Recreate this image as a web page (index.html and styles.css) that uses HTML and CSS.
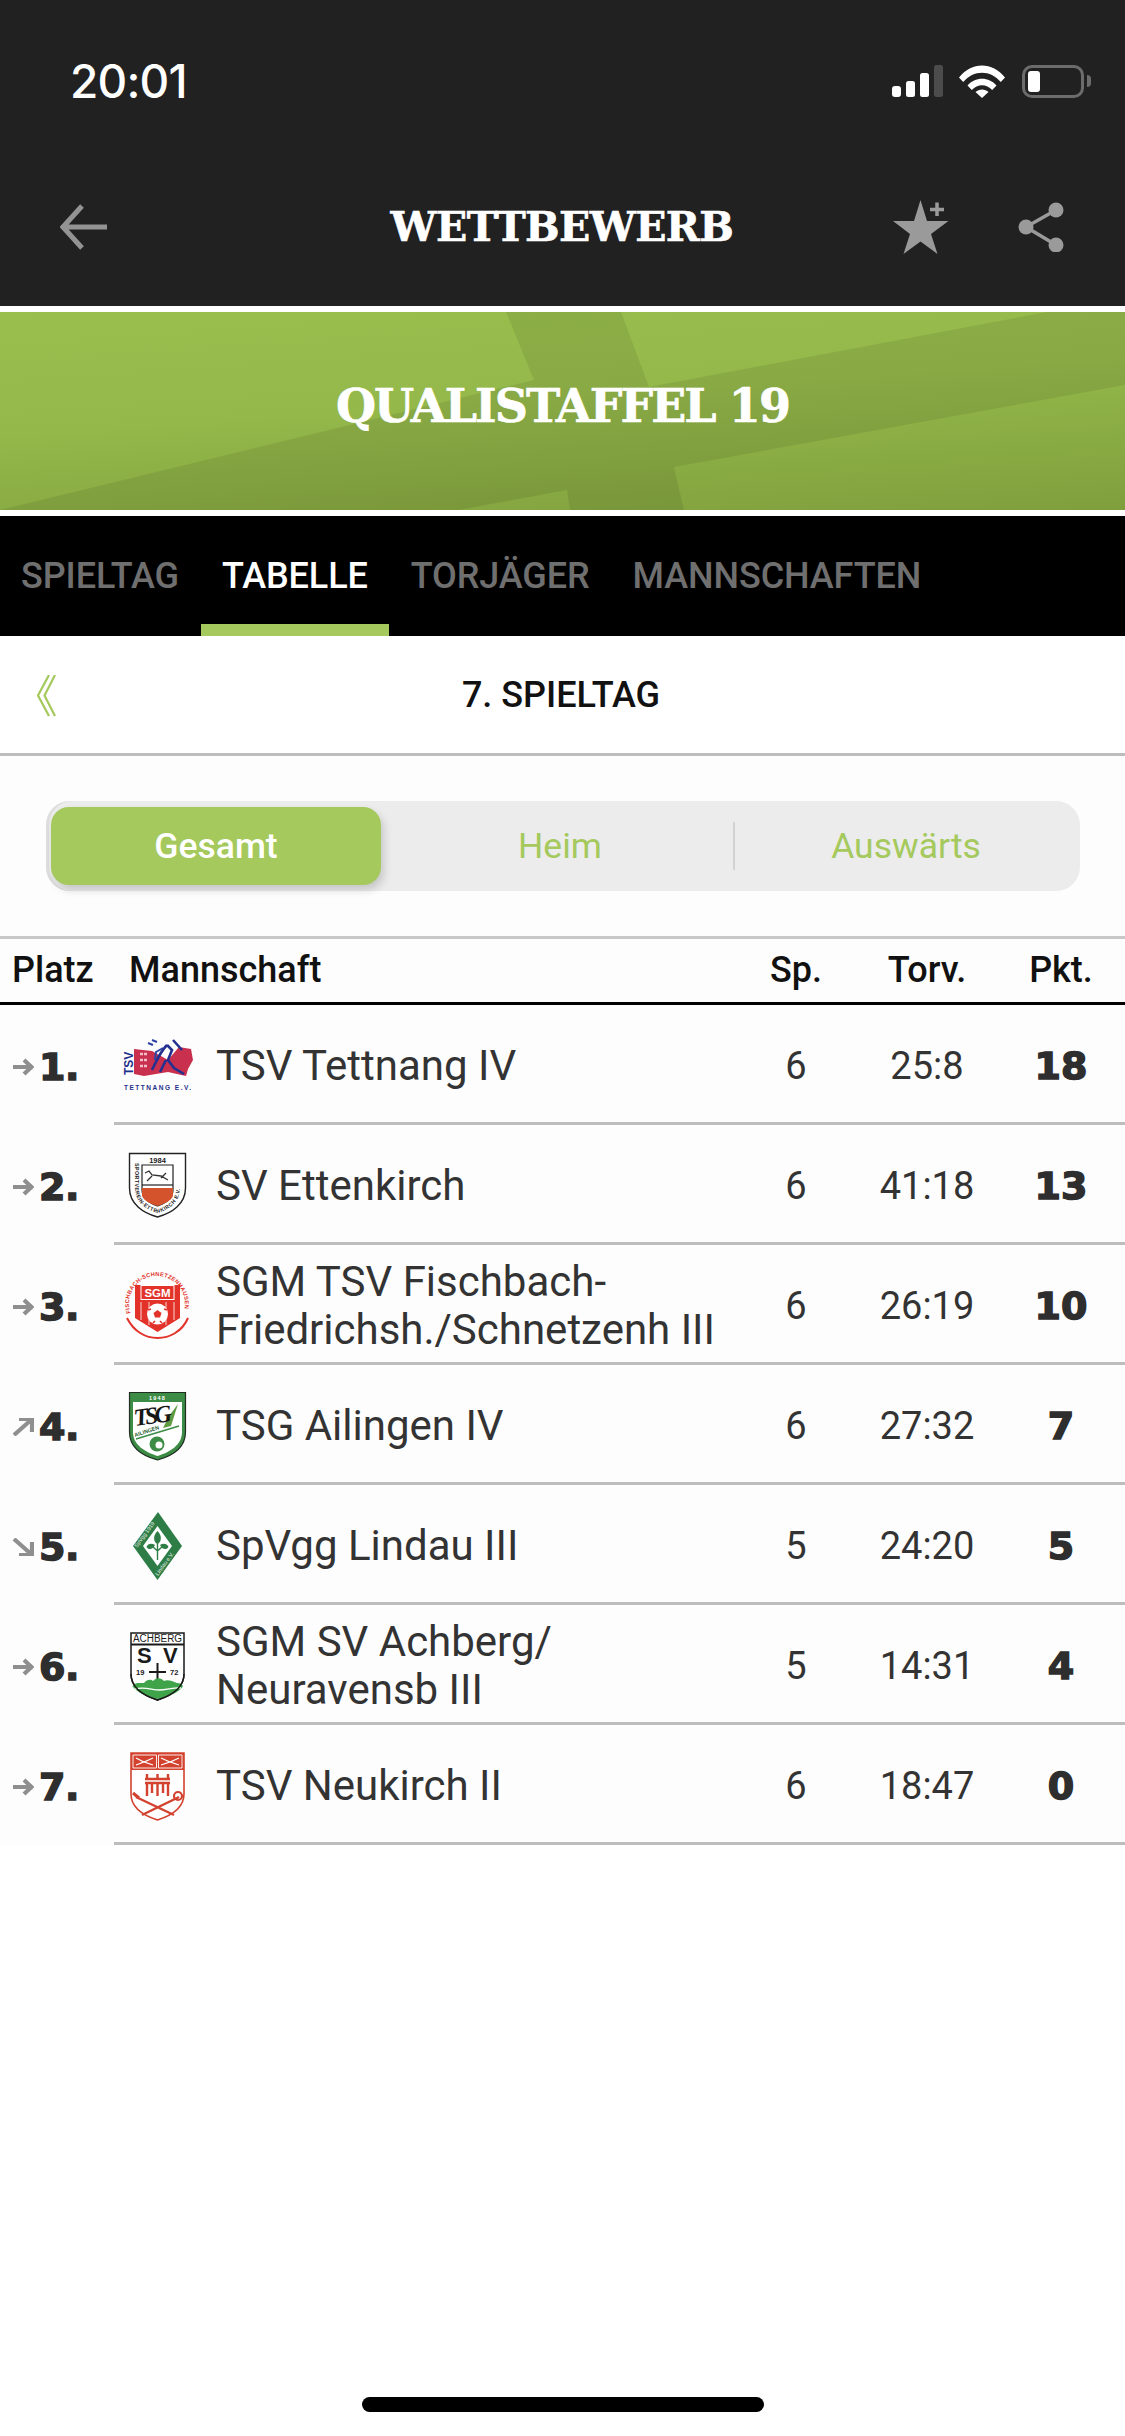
FILE: index.html
```html
<!DOCTYPE html>
<html lang="de">
<head>
<meta charset="utf-8">
<title>Wettbewerb</title>
<link rel="stylesheet" href="styles.css">
</head>
<body>
<div class="page">
  <header class="topbar">
    <div class="statusbar">
      <span class="time">20:01</span>
      <div class="status-icons">
        <svg class="ic-signal" viewBox="0 0 51 32" width="51" height="32"><rect x="0" y="21" width="9" height="11" rx="3" fill="#fff"/><rect x="14" y="16" width="9" height="16" rx="2.5" fill="#fff"/><rect x="28" y="8" width="9" height="24" rx="2.5" fill="#fff"/><rect x="42" y="0" width="9" height="32" rx="2.5" fill="#4c4c4c"/></svg>
        <svg class="ic-wifi" viewBox="0 0 46 33" width="46" height="33"><path d="M0 12.5C12.5 -3.5 33.5 -3.5 46 12.5L41.8 17C31.5 4.5 14.5 4.5 4.2 17Z" fill="#fff"/><path d="M8.5 20.5C16 11.5 30 11.5 37.500 20.500L33.200 25C27.500 18.500 18.500 18.500 12.800 25Z" fill="#fff"/><path d="M16.500 27C20 23.500 26 23.500 29.500 27L23 33Z" fill="#fff"/></svg>
        <div class="battery"><span class="battery-fill"></span></div>
        <span class="battery-nub"></span>
      </div>
    </div>
    <nav class="navbar">
      <svg class="ic-back" viewBox="0 0 47 46" width="47" height="46"><path d="M22 2 3 23 22 44M3 23H47" fill="none" stroke="#939393" stroke-width="5"/></svg>
      <h1 class="nav-title">WETTBEWERB</h1>
      <div class="nav-actions">
        <svg class="ic-star" viewBox="0 0 56 54" width="56" height="54"><path d="M27.500 0 34 21H55.500L38 34 44.500 54 27.500 41.500 10.500 54 17 34 0 21H21Z" fill="#9a9a9a"/><path d="M44 2.500V16M37 9.500H51" stroke="#9a9a9a" stroke-width="3.500"/></svg>
        <svg class="ic-share" viewBox="0 0 46 50" width="46" height="50"><path d="M38 8 8 25 38 43" fill="none" stroke="#9a9a9a" stroke-width="3.500"/><circle cx="38" cy="8" r="7.500" fill="#9a9a9a"/><circle cx="8" cy="25" r="7.500" fill="#9a9a9a"/><circle cx="38" cy="43" r="7.500" fill="#9a9a9a"/></svg>
      </div>
    </nav>
  </header>

  <section class="banner">
    <svg class="banner-art" viewBox="0 0 1125 198" preserveAspectRatio="none"><path d="M506 0H621L649 75 1047 0H1125V73L674 155 684 198H570L567 178 459 198H0L534 68Z" fill="#000" fill-opacity=".08"/></svg>
    <h2 class="banner-title">QUALISTAFFEL 19</h2>
  </section>

  <nav class="tabs">
    <a class="tab">SPIELTAG</a>
    <a class="tab tab-active">TABELLE</a>
    <a class="tab">TORJÄGER</a>
    <a class="tab">MANNSCHAFTEN</a>
  </nav>

  <div class="matchday">
    <svg class="ic-chevrons" viewBox="0 0 19 42" width="19" height="42"><path d="M12 0 1 20.500 12 41M18 0 7.500 20.500 18 41" fill="none" stroke="#a5c95c" stroke-width="2.200"/></svg>
    <span class="matchday-label">7. SPIELTAG</span>
  </div>

  <div class="segment-wrap">
    <div class="segment">
      <div class="seg seg-active">Gesamt</div>
      <div class="seg seg-mid">Heim</div>
      <div class="seg-sep"></div>
      <div class="seg seg-last">Auswärts</div>
    </div>
  </div>

  <main class="table">
    <div class="thead">
      <span class="th-place">Platz</span>
      <span class="th-team">Mannschaft</span>
      <span class="num">Sp.</span>
      <span class="num">Torv.</span>
      <span class="num">Pkt.</span>
    </div>

    <div class="row">
      <div class="place">
        <svg class="trend" viewBox="0 0 22 18" width="22" height="18"><path d="M1 9H19M12 2 19.500 9 12 16" fill="none" stroke="#8f8f8f" stroke-width="4.200"/></svg>
        <span class="rank">1.</span>
      </div>
      <div class="cells">
        <svg class="logo" viewBox="0 0 72 72" width="72" height="72">
          <path d="M12 19 30 21 46 30 57 17 69 19 71 30 66 39 64 46 46 42 22 46 12 44Z" fill="#c9304e"/>
          <path d="M30 40C36 28 38 22 45 15M45 15 50 20 46 30 52 38 62 44M44 30 38 42M51 10 60 20" fill="none" stroke="#24308f" stroke-width="2.600"/>
          <path d="M41 18 34 22 33 30M26 13 31 15M30 10 35 12" fill="none" stroke="#2d44a6" stroke-width="2"/>
          <path d="M18 24H26M18 30H26M18 36H26" stroke="#f3bcc8" stroke-width="2.500" stroke-dasharray="3 1"/>
          <text class="logo-b" x="11" y="45" transform="rotate(-90 11 45)" font-size="12" fill="#1d2f8c">TSV</text>
          <text class="logo-b" x="2" y="60" font-size="6.500" textLength="67" fill="#1d2f8c">TETTNANG E.V.</text>
        </svg>
        <div class="team">TSV Tettnang IV</div>
        <span class="num val">6</span><span class="num val">25:8</span><span class="num pts">18</span>
      </div>
    </div>

    <div class="row">
      <div class="place">
        <svg class="trend" viewBox="0 0 22 18" width="22" height="18"><path d="M1 9H19M12 2 19.500 9 12 16" fill="none" stroke="#8f8f8f" stroke-width="4.200"/></svg>
        <span class="rank">2.</span>
      </div>
      <div class="cells">
        <svg class="logo" viewBox="0 0 72 72" width="72" height="72">
          <defs><path id="ett" d="M13 13V38C13 52 24 60 35.500 63C47 60 58 52 58 38V13"/></defs>
          <path d="M7.500 3.500H63.500V38C63.500 54 50 63 35.500 67 21 63 7.500 54 7.500 38Z" fill="#fff" stroke="#222" stroke-width="1.400"/>
          <text class="logo-b" x="35.500" y="12.500" font-size="7.500" text-anchor="middle" fill="#222">1984</text>
          <path d="M20 15H51V40C51 49 43 53 35.500 56 28 53 20 49 20 40Z" fill="#fff" stroke="#222" stroke-width="1.200"/>
          <path d="M20 35H51" stroke="#222" stroke-width="1.200"/>
          <path d="M20 38H51V46C49 51 42 54 35.500 56 29 54 22 51 20 46Z" fill="#d4532c"/>
          <path d="M23 23 27 21 30 25 39 26 46 30M30 26 25 31M39 28 44 23" fill="none" stroke="#333" stroke-width="1.300"/>
          <text font-size="5.300" class="logo-b" fill="#222" letter-spacing=".45"><textPath href="#ett" startOffset="0">SPORTVEREIN-ETTENKIRCH E.V.</textPath></text>
        </svg>
        <div class="team">SV Ettenkirch</div>
        <span class="num val">6</span><span class="num val">41:18</span><span class="num pts">13</span>
      </div>
    </div>

    <div class="row">
      <div class="place">
        <svg class="trend" viewBox="0 0 22 18" width="22" height="18"><path d="M1 9H19M12 2 19.500 9 12 16" fill="none" stroke="#8f8f8f" stroke-width="4.200"/></svg>
        <span class="rank">3.</span>
      </div>
      <div class="cells">
        <svg class="logo" viewBox="0 0 72 72" width="72" height="72">
          <defs><path id="sgm" d="M8.500 43A28 28 0 1 1 61.500 43"/></defs>
          <path d="M5 48C12 62 24 68 35.500 68 47 68 60 62 66 48" fill="none" stroke="#e3322a" stroke-width="2"/>
          <text class="logo-b" font-size="5.700" fill="#e3322a" letter-spacing=".3"><textPath href="#sgm" startOffset="0">FISCHBACH-SCHNETZENHAUSEN</textPath></text>
          <path d="M13 15H58L58 48 35.500 62 13 48Z" fill="#e3322a"/>
          <path d="M19 32V50M27 32V55M44 32V55M52 32V50" stroke="#fff" stroke-width=".8"/>
          <rect x="19" y="15.500" width="33" height="14" fill="#e3322a" stroke="#fff" stroke-width="1"/>
          <text class="logo-b" x="35.500" y="26.500" font-size="11.500" text-anchor="middle" fill="#fff">SGM</text>
          <circle cx="35.500" cy="44" r="10.500" fill="#fff"/>
          <path d="M35.500 40 39.500 43 38 47.500H33L31.500 43Z" fill="#e3322a"/>
          <path d="M26 40 29 39M45 40 42 39M31 53 33 51M40 53 38 51" stroke="#e3322a" stroke-width="1.600"/>
        </svg>
        <div class="team">SGM TSV Fischbach-Friedrichsh./Schnetzenh III</div>
        <span class="num val">6</span><span class="num val">26:19</span><span class="num pts">10</span>
      </div>
    </div>

    <div class="row">
      <div class="place">
        <svg class="trend" viewBox="0 0 22 18" width="22" height="18"><path d="M2 17 19 2M7 1H20V14" fill="none" stroke="#8f8f8f" stroke-width="4.200"/></svg>
        <span class="rank">4.</span>
      </div>
      <div class="cells">
        <svg class="logo" viewBox="0 0 72 72" width="72" height="72">
          <path d="M7.500 2.500H63.500V42C63.500 58 50 66 35.500 70 21 66 7.500 58 7.500 42Z" fill="#3c8c45" stroke="#1f2f22" stroke-width="1.200"/>
          <path d="M11 12H60V42C60 55 48 62 35.500 66 23 62 11 55 11 42Z" fill="#fff"/>
          <text class="logo-b" x="35.500" y="9.600" font-size="5.500" letter-spacing="1.200" text-anchor="middle" fill="#fff">1948</text>
          <path d="M47 26 56 14 49 36 41 38Z" fill="#5f9b42"/>
          <text x="13" y="36" font-size="24" font-weight="700" font-style="italic" fill="#161616" class="logo-s" textLength="38" transform="rotate(-8 13 36)">TSG</text>
          <text class="logo-b" x="13" y="47" font-size="5.400" fill="#2b5f33" transform="rotate(-18 13 47)">AILINGEN</text>
          <path d="M14 49 57 36" stroke="#3c8c45" stroke-width="1.500"/>
          <circle cx="35" cy="54" r="7.500" fill="#3c8c45"/>
          <circle cx="37" cy="55" r="3.500" fill="#fff"/>
        </svg>
        <div class="team">TSG Ailingen IV</div>
        <span class="num val">6</span><span class="num val">27:32</span><span class="num pts">7</span>
      </div>
    </div>

    <div class="row">
      <div class="place">
        <svg class="trend" viewBox="0 0 22 18" width="22" height="18"><path d="M2 1 19 16M20 4V17H7" fill="none" stroke="#8f8f8f" stroke-width="4.200"/></svg>
        <span class="rank">5.</span>
      </div>
      <div class="cells">
        <svg class="logo" viewBox="0 0 72 72" width="72" height="72">
          <path d="M36 2 60 36 35.500 70 11 36Z" fill="#2e7d46"/>
          <path d="M35.500 16 50 36 35.500 56 21 36Z" fill="#fff"/>
          <path d="M35.500 21C40 25 40 32 35.500 34 31 32 31 25 35.500 21ZM33 35C31 40 26 40 24.500 37 26 33 30 33 33 35ZM38 35C40 40 45 40 46.500 37 45 33 41 33 38 35Z" fill="#2e7d46"/>
          <path d="M35.500 30V50M35.500 41 30 36M35.500 41 41 36" stroke="#2e7d46" stroke-width="1.400" fill="none"/>
          <text font-size="5.500" fill="#e6f0e8" class="logo-a" x="15" y="38" transform="rotate(-54 15 38)">SpVgg 1919</text>
          <text font-size="5.500" fill="#e6f0e8" class="logo-a" x="36" y="66" transform="rotate(-54 36 66)">Lindau e.V.</text>
        </svg>
        <div class="team">SpVgg Lindau III</div>
        <span class="num val">5</span><span class="num val">24:20</span><span class="num pts">5</span>
      </div>
    </div>

    <div class="row">
      <div class="place">
        <svg class="trend" viewBox="0 0 22 18" width="22" height="18"><path d="M1 9H19M12 2 19.500 9 12 16" fill="none" stroke="#8f8f8f" stroke-width="4.200"/></svg>
        <span class="rank">6.</span>
      </div>
      <div class="cells">
        <svg class="logo" viewBox="0 0 72 72" width="72" height="72">
          <path d="M9 3H62V44C62 58 48 66 35.500 70 23 66 9 58 9 44Z" fill="#fff" stroke="#1a1a1a" stroke-width="1.500"/>
          <path d="M9 14.500H62" stroke="#1a1a1a" stroke-width="1.800"/>
          <text class="logo-a" x="11" y="12" font-size="10" fill="#1a1a1a" textLength="49" lengthAdjust="spacingAndGlyphs">ACHBERG</text>
          <text class="logo-b" x="15" y="33" font-size="22" fill="#1a1a1a">S</text>
          <text class="logo-b" x="41" y="33" font-size="22" fill="#1a1a1a">V</text>
          <path d="M35.500 33V51M27 42H44" stroke="#1a1a1a" stroke-width="2"/>
          <text class="logo-b" x="14" y="45" font-size="7.500" fill="#1a1a1a">19</text>
          <text class="logo-b" x="48" y="45" font-size="7.500" fill="#1a1a1a">72</text>
          <path d="M10.500 56C13 52 18 53 22 53 25 49 29 49 31 51 35 47 39 48 42 51 46 49 52 52 55 53 58 53 60 54 61 56 58 62 46 67 35.500 69 25 67 14 62 10.500 56Z" fill="#3fa34a"/>
          <path d="M13 59C22 56 30 60 37 60 45 60 52 57 59 58" fill="none" stroke="#fff" stroke-width="1.300"/>
          <path d="M9 44C9 58 23 66 35.500 70 48 66 62 58 62 44" fill="none" stroke="#1a1a1a" stroke-width="1.500"/>
        </svg>
        <div class="team">SGM SV Achberg/ Neuravensb III</div>
        <span class="num val">5</span><span class="num val">14:31</span><span class="num pts">4</span>
      </div>
    </div>

    <div class="row">
      <div class="place">
        <svg class="trend" viewBox="0 0 22 18" width="22" height="18"><path d="M1 9H19M12 2 19.500 9 12 16" fill="none" stroke="#8f8f8f" stroke-width="4.200"/></svg>
        <span class="rank">7.</span>
      </div>
      <div class="cells">
        <svg class="logo" viewBox="0 0 72 72" width="72" height="72">
          <path d="M9 3H62V44C62 59 48 66 35.500 70 23 66 9 59 9 44Z" fill="#fff" stroke="#d3422f" stroke-width="1.600"/>
          <path d="M9 3H62V20H9Z" fill="#d3422f"/>
          <path d="M11 5H34.500V18H11ZM36.500 5H60V18H36.500Z" fill="#d3422f" stroke="#fff" stroke-width=".9"/>
          <path d="M14 8 22 12 31 8M14 15 22 12 31 15M39 8 48 12 57 8M39 15 48 12 57 15" fill="none" stroke="#fff" stroke-width="1.200"/>
          <path d="M23 29H48M23 33H48M25 33V46M30 33V43M35.500 33V46M41 33V43M46 33V46M25 28V24M35.500 28V24M46 28V24" fill="none" stroke="#d3422f" stroke-width="2.400"/>
          <path d="M14 47 52 65M57 47 20 65" stroke="#d3422f" stroke-width="2.400"/>
          <circle cx="56" cy="46" r="4" fill="none" stroke="#d3422f" stroke-width="2.200"/>
          <path d="M11 43 17 48" stroke="#d3422f" stroke-width="3"/>
        </svg>
        <div class="team">TSV Neukirch II</div>
        <span class="num val">6</span><span class="num val">18:47</span><span class="num pts">0</span>
      </div>
    </div>
  </main>

  <div class="filler"></div>
  <div class="home-indicator"></div>
</div>
</body>
</html>
```
FILE: styles.css
```css
* { box-sizing: border-box; }
html, body { margin: 0; padding: 0; background: #fff; }
body { width: 1125px; font-family: Roboto, "Liberation Sans", sans-serif; }
h1, h2 { margin: 0; font-weight: 700; }

.page { display: flex; flex-direction: column; min-height: 2436px; }

/* top bar */
.topbar { background: #212121; height: 306px; display: flex; flex-direction: column; }
.statusbar { height: 162px; padding: 0 34px 0 70px; display: flex; align-items: center; justify-content: space-between; }
.time { font-family: Inter, Roboto, sans-serif; font-size: 46px; font-weight: 500; color: #fff; letter-spacing: -0.8px; }
.status-icons { display: flex; align-items: center; }
.ic-signal { margin-right: 16px; }
.ic-wifi { margin-right: 17px; }
.battery { width: 62px; height: 33px; border: 3px solid #6c6c6c; border-radius: 10px; padding: 3px; }
.battery-fill { display: block; width: 12px; height: 21px; background: #fff; border-radius: 3px; }
.battery-nub { width: 4px; height: 12px; margin-left: 3px; background: #6c6c6c; border-radius: 0 6px 6px 0; }

.navbar { flex: 1; display: grid; grid-template-columns: 1fr auto 1fr; align-items: center; padding: 0 61px 14px 60px; }
.ic-back { display: block; }
.nav-title { font-family: "DejaVu Serif", serif; font-size: 41px; color: #fff; letter-spacing: -0.6px; -webkit-text-stroke: 0.6px #fff; }
.nav-actions { justify-self: end; display: flex; align-items: center; gap: 69px; }
.ic-star, .ic-share { display: block; }

/* banner */
.banner { position: relative; height: 198px; margin: 6px 0; padding-bottom: 10px; display: flex; align-items: center; justify-content: center; background: linear-gradient(176deg, #9abf4e 0%, #94b84a 45%, #7f9f3d 100%); overflow: hidden; }
.banner-art { position: absolute; inset: 0; width: 100%; height: 100%; }
.banner-title { position: relative; font-family: "DejaVu Serif", serif; font-size: 46px; color: #fff; letter-spacing: -1.9px; -webkit-text-stroke: 0.6px #fff; }

/* tabs */
.tabs { background: #000; height: 120px; display: flex; gap: 1px; }
.tab { padding: 12px 21px 0; display: flex; align-items: center; font-size: 36px; font-weight: 500; letter-spacing: -0.1px; color: #6f6f6f; border-bottom: 12px solid transparent; }
.tab-active { color: #fff; border-bottom-color: #a5c95c; }

/* matchday */
.matchday { position: relative; height: 120px; padding-right: 3px; border-bottom: 3px solid #bdbdbd; display: flex; align-items: center; justify-content: center; }
.ic-chevrons { position: absolute; left: 37px; top: 39px; }
.matchday-label { font-size: 36px; font-weight: 500; color: #111; }

/* segmented control */
.segment-wrap { padding: 45px 45px 45px 46px; background: #fdfdfd; }
.segment { height: 90px; background: #ececec; border-radius: 24px; display: flex; align-items: center; padding: 0 6px 0 5px; box-shadow: inset 3px 0 0 #dedede; }
.seg { font-size: 35.500px; color: #a5c95c; text-align: center; }
.seg-active { width: 330px; height: 78px; line-height: 78px; background: #a5c95c; color: #fff; font-weight: 500; border-radius: 18px; box-shadow: 3px 5px 8px rgba(0,0,0,.16); }
.seg-mid { width: 352px; padding-left: 6px; }
.seg-sep { width: 2px; height: 48px; background: #d2d2d2; }
.seg-last { flex: 1; padding-left: 3px; }

/* table */
.table { background: #fdfdfd; }
.thead { display: grid; grid-template-columns: 129px 606px 122px 140px 128px; align-items: center; height: 69px; padding-bottom: 2px; border-top: 3px solid #c8c8c8; border-bottom: 3px solid #000; font-size: 36px; font-weight: 500; color: #111; }
.th-place { padding-left: 12px; }
.num { text-align: center; }

.row { display: flex; height: 120px; }
.place { width: 114px; flex: none; display: flex; align-items: center; padding: 4px 0 0 12px; gap: 5px; }
.trend { flex: none; display: block; }
.rank { font-family: "DejaVu Sans", sans-serif; font-weight: 700; font-size: 38px; color: #2e2e2e; -webkit-text-stroke: 1.5px #2e2e2e; letter-spacing: -0.5px; }
.cells { flex: 1; display: grid; grid-template-columns: 102px 519px 122px 140px 128px; align-items: center; padding-top: 4px; border-bottom: 3px solid #bdbdbd; }
.logo { display: block; margin-left: 8px; }
.team { font-size: 42px; line-height: 48px; color: #333; }
.val { font-size: 38px; color: #333; }
.pts { font-family: "DejaVu Sans", sans-serif; font-weight: 700; font-size: 38px; color: #2e2e2e; -webkit-text-stroke: 1.5px #2e2e2e; }

.logo-b { font-family: "Liberation Sans", sans-serif; font-weight: 700; }
.logo-a { font-family: "Liberation Sans", sans-serif; }
.logo-s { font-family: "Liberation Serif", serif; }

.filler { flex: 1; }
.home-indicator { width: 402px; height: 15px; margin: 0 auto 24px; background: #000; border-radius: 8px; }
```
